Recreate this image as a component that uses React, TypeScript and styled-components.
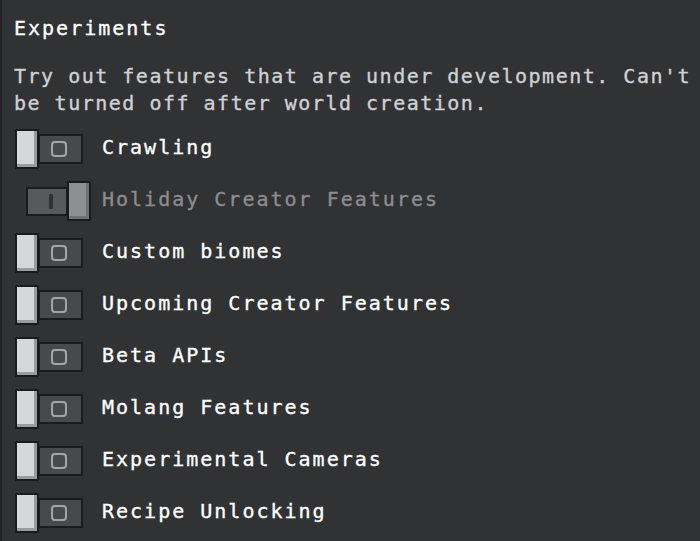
import React from 'react';
import styled, { createGlobalStyle } from 'styled-components';

const COLOR_BG = '#313233';
const COLOR_EDGE = '#232325';
const COLOR_TEXT = '#ffffff';
const COLOR_MUTED = '#d0d1d4';
const COLOR_DISABLED = '#8c8d90';

const GlobalStyle = createGlobalStyle`
  html, body {
    margin: 0;
    background: ${COLOR_BG};
  }
  body {
    font-family: 'DejaVu Sans Mono', 'Liberation Mono', monospace;
    -webkit-text-stroke: 0.35px currentColor;
  }
`;

interface Experiment {
  label: string;
  enabled: boolean;
  disabled?: boolean;
}

const experiments: Experiment[] = [
  { label: 'Crawling', enabled: false },
  { label: 'Holiday Creator Features', enabled: true, disabled: true },
  { label: 'Custom biomes', enabled: false },
  { label: 'Upcoming Creator Features', enabled: false },
  { label: 'Beta APIs', enabled: false },
  { label: 'Molang Features', enabled: false },
  { label: 'Experimental Cameras', enabled: false },
  { label: 'Recipe Unlocking', enabled: false },
];

const Panel = styled.div`
  width: 700px;
  height: 541px;
  box-sizing: border-box;
  border-left: 2px solid ${COLOR_EDGE};
  padding: 15px 0 0 12px;
  overflow: hidden;
  display: flex;
  flex-direction: column;
`;

const Title = styled.div`
  font-size: 20px;
  line-height: 27px;
  letter-spacing: 2px;
  color: ${COLOR_TEXT};
`;

const Description = styled.p`
  margin: 21px 0 6px;
  font-size: 20px;
  line-height: 27px;
  letter-spacing: 1.5px;
  color: ${COLOR_MUTED};
`;

const List = styled.div`
  display: flex;
  flex-direction: column;
`;

const Row = styled.div`
  height: 52px;
  display: flex;
  align-items: center;
`;

const SwitchSlot = styled.div<{ $on: boolean }>`
  width: 88px;
  flex-shrink: 0;
  display: flex;
  align-items: center;
  padding-left: ${p => (p.$on ? '12px' : '1px')};
  box-sizing: border-box;
`;

const Knob = styled.div<{ $disabled?: boolean }>`
  width: 24px;
  height: 40px;
  box-sizing: border-box;
  border: 2px solid #1b1b1c;
  background: ${p => (p.$disabled ? '#8e8f91' : '#d6d7da')};
  box-shadow: inset -3px -3px 0
    ${p => (p.$disabled ? '#707173' : '#9a9b9e')};
  position: relative;
  z-index: 1;
`;

const Track = styled.div<{ $disabled?: boolean; $on: boolean }>`
  width: ${p => (p.$on ? '42px' : '45px')};
  height: ${p => (p.$on ? '29px' : '30px')};
  box-sizing: border-box;
  border: 2px solid #1b1b1c;
  background: ${p => (p.$disabled ? '#58595b' : '#48494a')};
  margin: ${p => (p.$on ? '0 -1px 0 0' : '0 0 0 -1px')};
  display: flex;
  align-items: center;
  justify-content: center;
`;

const Ring = styled.span`
  width: 16px;
  height: 16px;
  box-sizing: border-box;
  border: 2px solid #a3a4a7;
  border-radius: 4px;
  margin-left: -3px;
`;

const Bar = styled.span`
  width: 4px;
  height: 15px;
  background: #313233;
  margin-left: 8px;
`;

const Label = styled.span<{ $disabled?: boolean }>`
  font-size: 20px;
  line-height: 27px;
  letter-spacing: 2px;
  padding-bottom: 4px;
  color: ${p => (p.$disabled ? COLOR_DISABLED : COLOR_TEXT)};
  white-space: nowrap;
`;

const Toggle: React.FC<{ on: boolean; disabled?: boolean }> = ({ on, disabled }) => (
  <SwitchSlot $on={on}>
    {on ? (
      <>
        <Track $on $disabled={disabled}>
          <Bar />
        </Track>
        <Knob $disabled={disabled} />
      </>
    ) : (
      <>
        <Knob $disabled={disabled} />
        <Track $on={false} $disabled={disabled}>
          <Ring />
        </Track>
      </>
    )}
  </SwitchSlot>
);

export default function App() {
  return (
    <>
      <GlobalStyle />
      <Panel>
        <Title>Experiments</Title>
        <Description>
          Try out features that are under development. Can't be turned off after world creation.
        </Description>
        <List>
          {experiments.map(item => (
            <Row key={item.label}>
              <Toggle on={item.enabled} disabled={item.disabled} />
              <Label $disabled={item.disabled}>{item.label}</Label>
            </Row>
          ))}
        </List>
      </Panel>
    </>
  );
}
